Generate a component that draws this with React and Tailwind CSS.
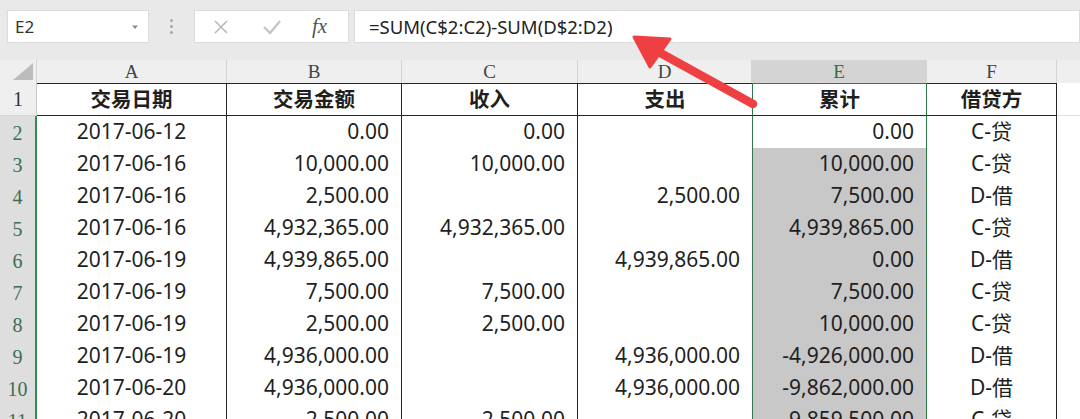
import React from 'react';

const cols = ['A', 'B', 'C', 'D', 'E', 'F'];

const rows = [
  ['2017-06-12', '0.00', '0.00', '', '0.00', 'C-贷'],
  ['2017-06-16', '10,000.00', '10,000.00', '', '10,000.00', 'C-贷'],
  ['2017-06-16', '2,500.00', '', '2,500.00', '7,500.00', 'D-借'],
  ['2017-06-16', '4,932,365.00', '4,932,365.00', '', '4,939,865.00', 'C-贷'],
  ['2017-06-19', '4,939,865.00', '', '4,939,865.00', '0.00', 'D-借'],
  ['2017-06-19', '7,500.00', '7,500.00', '', '7,500.00', 'C-贷'],
  ['2017-06-19', '2,500.00', '2,500.00', '', '10,000.00', 'C-贷'],
  ['2017-06-19', '4,936,000.00', '', '4,936,000.00', '-4,926,000.00', 'D-借'],
  ['2017-06-20', '4,936,000.00', '', '4,936,000.00', '-9,862,000.00', 'D-借'],
  ['2017-06-20', '2,500.00', '2,500.00', '', '-9,859,500.00', 'C-贷'],
];

const heads = ['交易日期', '交易金额', '收入', '支出', '累计', '借贷方'];

const gridCols = 'grid grid-cols-[37px_190px_175px_176px_174px_175px_130px_1fr]';
const sans = "font-['Noto_Sans','Noto_Sans_CJK_SC',sans-serif]";
const serif = "font-['Liberation_Serif','DejaVu_Serif',serif]";

function cellClass(ci, rowIdx, head) {
  // rowIdx 0 = header row 1
  let c = 'flex items-center border-b border-[#262626] text-[#1f1f1f] ';
  if (head || ci === 0 || ci === 5) c += 'justify-center ';
  else c += 'justify-end pr-3 ';
  if (ci === 4) c += 'border-x border-x-[#2e7a4b] ';
  else if (ci !== 3) c += 'border-r border-r-[#262626] ';
  if (ci === 4 && rowIdx >= 2) c += 'bg-[#c8c8c8] ';
  else c += 'bg-white ';
  return c;
}

export default function App() {
  return (
    <div className={`relative w-[1080px] h-[419px] overflow-hidden bg-[#e9e9e9] ${sans}`}>
      {/* formula bar */}
      <div className="flex items-center h-[43px] pt-[10px] pl-[7px]">
        <div className="flex items-center justify-between w-[142px] h-[33px] bg-white border border-[#dcdcdc] pl-[7px] pr-[9px]">
          <span className="text-[17px] text-[#333]">E2</span>
          <svg width="8" height="6" viewBox="0 0 8 6">
            <path d="M1 1.5 L7 1.5 L4 5 Z" fill="#8a8a8a" />
          </svg>
        </div>
        <div className="flex flex-col gap-[3px] w-[45px] items-center">
          <span className="w-[3px] h-[3px] rounded-full bg-[#a8a8a8]" />
          <span className="w-[3px] h-[3px] rounded-full bg-[#a8a8a8]" />
          <span className="w-[3px] h-[3px] rounded-full bg-[#a8a8a8]" />
        </div>
        <div className="flex items-center w-[155px] h-[33px] bg-white border border-[#dcdcdc] pl-[17px]">
          <svg width="18" height="18" viewBox="0 0 18 18">
            <path d="M3 3 L15 15 M15 3 L3 15" stroke="#b8b8b8" strokeWidth="1.6" />
          </svg>
          <svg width="20" height="18" viewBox="0 0 20 18" className="ml-[32px]">
            <path d="M2 9 L8 15 L18 3" stroke="#c4c4c4" strokeWidth="2.2" fill="none" />
          </svg>
          <span className={`ml-[30px] italic text-[21px] text-[#555] ${serif}`}>fx</span>
        </div>
        <div className="flex items-center flex-1 h-[33px] ml-[5px] bg-white border border-[#dcdcdc] pl-[14px]">
          <span className="text-[18.5px] text-[#222]">=SUM(C$2:C2)-SUM(D$2:D2)</span>
        </div>
      </div>

      <div className="h-[17px]" />

      {/* column headers */}
      <div className={`${gridCols} h-[23px] bg-[#efefef] ${serif}`}>
        <div className="relative border-r border-[#d4d4d4]">
          <svg width="20" height="17" viewBox="0 0 20 17" className="absolute right-[3px] bottom-[3px]">
            <path d="M20 0 L20 17 L0 17 Z" fill="#bcbcbc" />
          </svg>
        </div>
        {cols.map((c) => (
          <div
            key={c}
            className={`flex items-end justify-center leading-none pb-[2px] text-[19px] border-r border-[#d4d4d4] ${
              c === 'E' ? 'bg-[#d4d4d4] text-[#2e6e48]' : 'text-[#444]'
            }`}
          >
            {c}
          </div>
        ))}
        <div className="bg-[#efefef]" />
      </div>

      {/* row 1 */}
      <div className={`${gridCols} h-[33px]`}>
        <div className={`flex items-end justify-center pb-[1px] bg-[#efefef] border-b border-[#d4d4d4] border-r border-r-[#c8c8c8] text-[20px] text-[#333] ${serif}`}>
          1
        </div>
        {heads.map((h, ci) => (
          <div
            key={h}
            className={`${cellClass(ci, 0, true)} font-bold text-[20.5px] border-t ${
              ci === 4 ? 'border-t-[#2e7a4b]' : 'border-t-[#262626]'
            }`}
          >
            {h}
          </div>
        ))}
        <div className="bg-white border-b border-[#e0e0e0]" />
      </div>

      {/* data rows */}
      {rows.map((r, ri) => (
        <div key={ri} className={`${gridCols} h-[32px]`}>
          <div className={`flex items-end justify-center bg-[#dedede] border-b border-[#c6c6c6] border-r-2 border-r-[#3a8a59] text-[20px] text-[#3c6f4f] ${serif}`}>
            {ri + 2}
          </div>
          {r.map((v, ci) => (
            <div key={ci} className={`${cellClass(ci, ri + 1, false)} text-[21px]`}>
              {v}
            </div>
          ))}
          <div className="bg-white border-b border-[#e0e0e0]" />
        </div>
      ))}

      {/* red arrow */}
      <svg
        width="1080"
        height="419"
        viewBox="0 0 1080 419"
        className="absolute left-0 top-0 pointer-events-none"
      >
        <line x1="753" y1="104" x2="655" y2="50" stroke="#ee3f42" strokeWidth="8.5" strokeLinecap="round" />
        <path d="M634 37 L670 39 L650 67 Z" fill="#ee3f42" stroke="#ee3f42" strokeWidth="3" strokeLinejoin="round" />
      </svg>
    </div>
  );
}
